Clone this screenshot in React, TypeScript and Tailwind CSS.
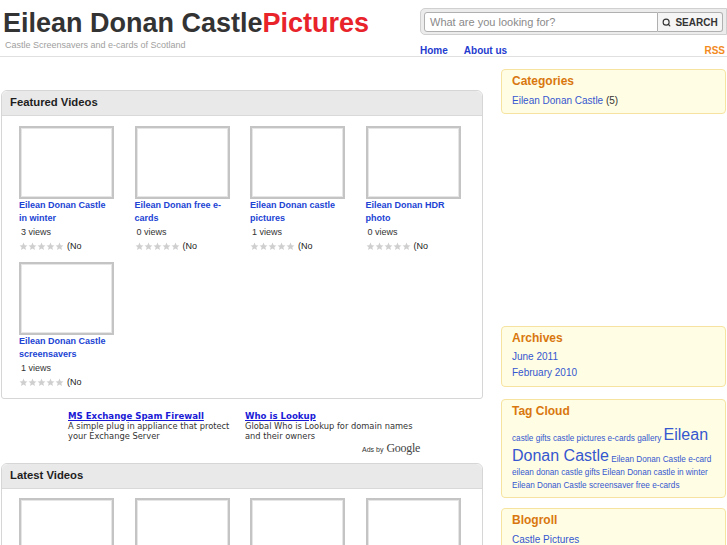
import { Search } from 'lucide-react';

const featured = [
    { title: 'Eilean Donan Castle in winter', views: 3 },
    { title: 'Eilean Donan free e-cards', views: 0 },
    { title: 'Eilean Donan castle pictures', views: 1 },
    { title: 'Eilean Donan HDR photo', views: 0 },
    { title: 'Eilean Donan Castle screensavers', views: 1 },
];

function Stars() {
    return (
        <span className="flex items-center">
            {[0, 1, 2, 3, 4].map((i) => (
                <svg key={i} width="9" height="9" viewBox="0 0 24 24" className="text-[#cfcfcf]">
                    <path fill="currentColor" d="M12 1.5l3.1 7 7.4.6-5.6 4.9 1.7 7.4L12 17.5l-6.6 3.9 1.7-7.4-5.6-4.9 7.4-.6z" />
                </svg>
            ))}
        </span>
    );
}

function Thumb() {
    return <div className="w-[95px] h-[73px] border-2 border-[#c4c4c4] bg-white shadow-[inset_0_0_0_1px_#e6e6e6]"></div>;
}

function VideoItem({ title, views }: { title: string; views: number }) {
    return (
        <div className="w-[115.5px] mb-[10px]">
            <Thumb />
            <a className="block w-[95px] text-[9px] leading-[13px] font-bold text-[#2143d4]">{title}</a>
            <div className="text-[9px] leading-[15px] text-[#333] pl-[2px]">{views} views</div>
            <div className="flex items-center gap-[3px] text-[9px] leading-[12px] text-[#222]">
                <Stars />
                <span>(No</span>
            </div>
        </div>
    );
}

function Panel({ title, children }: { title: string; children: React.ReactNode }) {
    return (
        <div className="border border-[#d6d6d6] rounded-t-[6px] rounded-b-[3px] bg-white">
            <div className="h-[25px] pb-[1px] bg-[#e9e9e9] border-b border-[#d9d9d9] rounded-t-[6px] px-[8px] flex items-center text-[11.3px] font-bold text-[#1e1e1e]">
                {title}
            </div>
            {children}
        </div>
    );
}

function SideBox({ title, children }: { title: string; children: React.ReactNode }) {
    return (
        <div className="bg-[#fffde3] border border-[#f7e3a0] rounded-[4px] pl-[10px] pr-[6px] pt-[4px] pb-[5px]">
            <div className="text-[12px] leading-[14px] font-bold text-[#d9770f]">{title}</div>
            {children}
        </div>
    );
}

export default function App() {
    return (
        <div className="w-[727px] h-[545px] overflow-hidden bg-white font-['Liberation_Sans',Arial,sans-serif]">
            {/* Header */}
            <div className="h-[57px] border-b border-[#e0e0e0] flex justify-between">
                <div className="pl-[3px] pt-[10px]">
                    <h1 className="text-[27px] leading-[27px] font-bold text-[#333] whitespace-nowrap">
                        Eilean Donan Castle<span className="text-[#e8232a]">Pictures</span>
                    </h1>
                    <div className="mt-[4px] pl-[2px] text-[9px] leading-[9px] text-[#a0a0a0]">Castle Screensavers and e-cards of Scotland</div>
                </div>
                <div className="w-[307px] pt-[8px]">
                    <div className="h-[27px] bg-[#ececec] border border-[#d0d0d0] rounded-l-[5px] pl-[3px] pt-[3px] pr-[3px] flex">
                        <div className="w-[234px] h-[20px] bg-white border border-[#b0b0b0] rounded-l-[3px] flex items-center pl-[5px] text-[11px] text-[#8a8a8a]">
                            What are you looking for?
                        </div>
                        <div className="w-[65px] h-[20px] bg-[#f5f5f5] border border-l-0 border-[#b0b0b0] rounded-r-[3px] flex items-center justify-center gap-[4px] text-[10px] font-bold text-[#333]">
                            <Search size={9} strokeWidth={3} />
                            SEARCH
                        </div>
                    </div>
                    <div className="mt-[11px] flex items-center text-[10px] leading-[10px] font-bold pr-[2px]">
                        <a className="text-[#1f3ccf]">Home</a>
                        <a className="ml-[16px] text-[#1f3ccf]">About us</a>
                        <a className="ml-auto text-[#f28a1e]">RSS</a>
                    </div>
                </div>
            </div>

            <div className="flex">
                {/* Main column */}
                <div className="w-[482px] ml-[1px] mt-[33px]">
                    <Panel title="Featured Videos">
                        <div className="flex flex-wrap pl-[17px] pt-[10px]">
                            {featured.map((v) => (
                                <VideoItem key={v.title} title={v.title} views={v.views} />
                            ))}
                        </div>
                    </Panel>

                    <div className="h-[64px] pl-[67px] pt-[12px] font-['DejaVu_Sans',Verdana,sans-serif]">
                        <div className="flex gap-[4px]">
                            <div className="w-[173px]">
                                <a className="block text-[8.6px] leading-[10px] font-bold text-[#1a1ad6] underline">MS Exchange Spam Firewall</a>
                                <div className="text-[8.3px] leading-[10px] text-[#333]">A simple plug in appliance that protect your Exchange Server</div>
                            </div>
                            <div className="w-[180px]">
                                <a className="block text-[8.6px] leading-[10px] font-bold text-[#1a1ad6] underline">Who is Lookup</a>
                                <div className="text-[8.3px] leading-[10px] text-[#333]">Global Who is Lookup for domain names and their owners</div>
                            </div>
                        </div>
                        <div className="w-[352px] flex justify-end items-baseline gap-[3px] leading-[12px] mt-[1px]">
                            <span className="text-[7px] text-[#333] font-['Liberation_Sans',Arial,sans-serif]">Ads by</span>
                            <span className="text-[12px] text-[#444] font-['Liberation_Serif',serif] tracking-[-0.3px]">Google</span>
                        </div>
                    </div>

                    <Panel title="Latest Videos">
                        <div className="flex flex-wrap pl-[17px] pt-[9px]">
                            {[0, 1, 2, 3].map((i) => (
                                <div key={i} className="w-[115.5px]">
                                    <Thumb />
                                </div>
                            ))}
                        </div>
                    </Panel>
                </div>

                {/* Sidebar */}
                <div className="w-[225px] ml-[18px] mt-[12px] flex flex-col">
                    <SideBox title="Categories">
                        <div className="mt-[6px] text-[10px] leading-[14px]">
                            <a className="text-[#3557d0]">Eilean Donan Castle</a> <span className="text-[#333]">(5)</span>
                        </div>
                    </SideBox>
                    <div className="h-[212px]"></div>
                    <SideBox title="Archives">
                        <div className="mt-[4px] text-[10px] leading-[16px] text-[#3557d0]">
                            <div>June 2011</div>
                            <div>February 2010</div>
                        </div>
                    </SideBox>
                    <div className="mt-[12px]">
                        <SideBox title="Tag Cloud">
                            <div className="mt-[6px] text-[8.2px] leading-[13px] text-[#3557d0]">
                                castle gifts castle pictures e-cards gallery{' '}
                                <span className="text-[16px] leading-[21px] align-bottom">Eilean Donan Castle</span>{' '}
                                Eilean Donan Castle e-card eilean donan castle gifts Eilean Donan castle in winter Eilean Donan Castle screensaver free e-cards
                            </div>
                        </SideBox>
                    </div>
                    <div className="mt-[10px]">
                        <SideBox title="Blogroll">
                            <div className="mt-[6px] text-[10px] leading-[14px] text-[#3557d0]">Castle Pictures</div>
                        </SideBox>
                    </div>
                </div>
            </div>
        </div>
    );
}
